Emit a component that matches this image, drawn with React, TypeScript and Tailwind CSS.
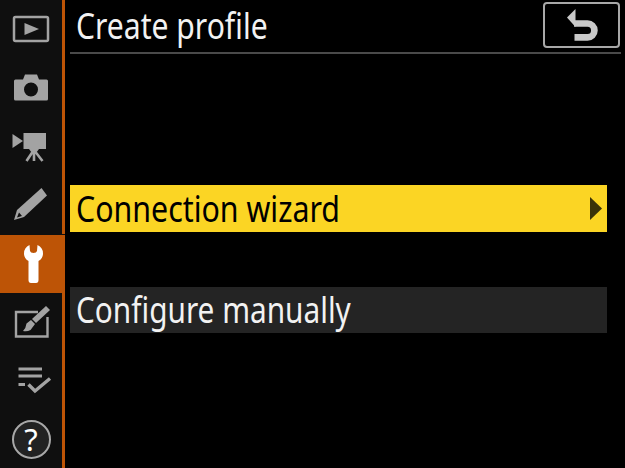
const gray = "#a3a3a3";

function RailIcon({ children }: { children: React.ReactNode }) {
  return (
    <svg width="62" height="58" viewBox="0 0 62 58" fill="none">
      {children}
    </svg>
  );
}

function Rail() {
  return (
    <aside className="flex flex-col w-[65px] h-[468px] bg-[#0f0f0f] border-r-[3px] border-[#bd5406]">
      {/* Playback */}
      <div className="flex-1 flex items-center justify-center">
        <RailIcon>
          <rect x="14" y="17" width="34" height="24" rx="1.5" stroke={gray} strokeWidth="2.5" />
          <path d="M24.5 23 L39 29 L24.5 35 Z" fill={gray} />
        </RailIcon>
      </div>
      {/* Photo */}
      <div className="flex-1 flex items-center justify-center">
        <RailIcon>
          <path
            fillRule="evenodd"
            d="M14 22 Q14 20.5 15.5 20.5 H23 L25 15.5 H37 L39 20.5 H46.5 Q48 20.5 48 22 V40 Q48 41.5 46.5 41.5 H15.5 Q14 41.5 14 40 Z M31 23.5 A7 7 0 1 0 31 37.5 A7 7 0 1 0 31 23.5 Z"
            fill={gray}
          />
        </RailIcon>
      </div>
      {/* Movie */}
      <div className="flex-1 flex items-center justify-center">
        <RailIcon>
          <path d="M12.5 17 L23 24 L12.5 31 Z" fill={gray} />
          <rect x="23.5" y="16" width="22.5" height="16" fill={gray} />
          <path d="M29 32 H39 L36 36 H32 Z" fill={gray} />
          <path d="M34 34 V44 M32.5 35 L26.5 44 M35.5 35 L42.5 44" stroke={gray} strokeWidth="2.6" />
        </RailIcon>
      </div>
      {/* Custom settings */}
      <div className="flex-1 flex items-center justify-center">
        <RailIcon>
          <path d="M41.5 13 L47 20.5 L24 42 L14 45 L17 35 Z" fill={gray} />
          <path d="M19 37.5 L22 41 L17 42.5 Z" fill="#0f0f0f" />
        </RailIcon>
      </div>
      {/* Setup, selected */}
      <div className="flex-1 flex items-center justify-center bg-[#bd5406] -mr-[3px] border-t border-[#0f0f0f]">
        <RailIcon>
          <path
            d="M27.5 10 L28 16 Q28.5 18 31.5 18 Q34.5 18 35 16 L35.5 10 Q41 12.5 41 18.5 Q41 23.5 36.5 26 L36.5 45 Q36.5 48 34 48 H29 Q26.5 48 26.5 45 L26.5 26 Q22 23.5 22 18.5 Q22 12.5 27.5 10 Z"
            fill="#ffffff"
          />
        </RailIcon>
      </div>
      {/* Retouch */}
      <div className="flex-1 flex items-center justify-center">
        <RailIcon>
          <path d="M38 19 H16 V43.5 H47.5 V24" stroke={gray} strokeWidth="2.4" />
          <path d="M46 13 L50 17 L36 30 L32 26 Z" fill={gray} />
          <path d="M31 27 L35 31 L30.5 37 Q27 39 23 38 Q26 35 26.5 30.5 Z" fill={gray} />
        </RailIcon>
      </div>
      {/* My menu */}
      <div className="flex-1 flex items-center justify-center">
        <RailIcon>
          <path d="M18.5 18 H42 M18.5 25 H42 M18.5 33.5 H25" stroke={gray} strokeWidth="3" />
          <path d="M28.5 33.5 L35 40 L50 27.5" stroke={gray} strokeWidth="3.4" />
        </RailIcon>
      </div>
      {/* Help */}
      <div className="flex-1 flex items-center justify-center">
        <div className="w-[39px] h-[39px] mt-[1px] rounded-full bg-[#222222] border-2 border-[#a8a8a8] flex items-center justify-center text-white text-[31px] font-normal leading-none">
          ?
        </div>
      </div>
    </aside>
  );
}

export default function App() {
  return (
    <div className="flex w-[625px] h-[468px] overflow-hidden bg-black font-['Noto_Sans',sans-serif]">
      <Rail />
      <main className="flex-1 flex flex-col pl-[5px]">
        <header className="flex items-center justify-between h-[54px] mr-[4px] border-b-2 border-[#4a4a4a] pl-[6px]">
          <h1 className="text-[#f2f2f2] text-[37px] leading-none font-normal scale-x-[0.813] origin-left pb-[4px]">Create profile</h1>
          <button className="flex items-center justify-center w-[77px] h-[46px] mr-[1px] mb-[2px] rounded-[4px] border-2 border-[#a8a8a8]">
            <svg width="36" height="32" viewBox="0 0 36 32" fill="none">
              <path d="M3 8.5 L11.5 0 V18 Z" fill="#c9c9c9" />
              <path d="M10 14.5 H23.5 A6.9 6.9 0 0 1 23.5 28.3 H10.5" stroke="#c9c9c9" strokeWidth="6.7" />
            </svg>
          </button>
        </header>

        <div className="flex flex-col mt-[131px] mr-[18px] gap-[55px]">
          <div className="flex items-center justify-between h-[47px] bg-[#fbd524] pl-[6px] pr-[5px]">
            <span className="inline-block text-black text-[37px] leading-none scale-x-[0.82] origin-left pb-[3px]">Connection wizard</span>
            <svg width="12" height="23" viewBox="0 0 12 23">
              <path d="M0 0 L12 11.5 L0 23 Z" fill="#3a3208" />
            </svg>
          </div>
          <div className="flex items-center h-[46px] bg-[#242424] pl-[6px]">
            <span className="inline-block text-[#f2f2f2] text-[37px] leading-none scale-x-[0.805] origin-left pb-[3px]">Configure manually</span>
          </div>
        </div>
      </main>
    </div>
  );
}
